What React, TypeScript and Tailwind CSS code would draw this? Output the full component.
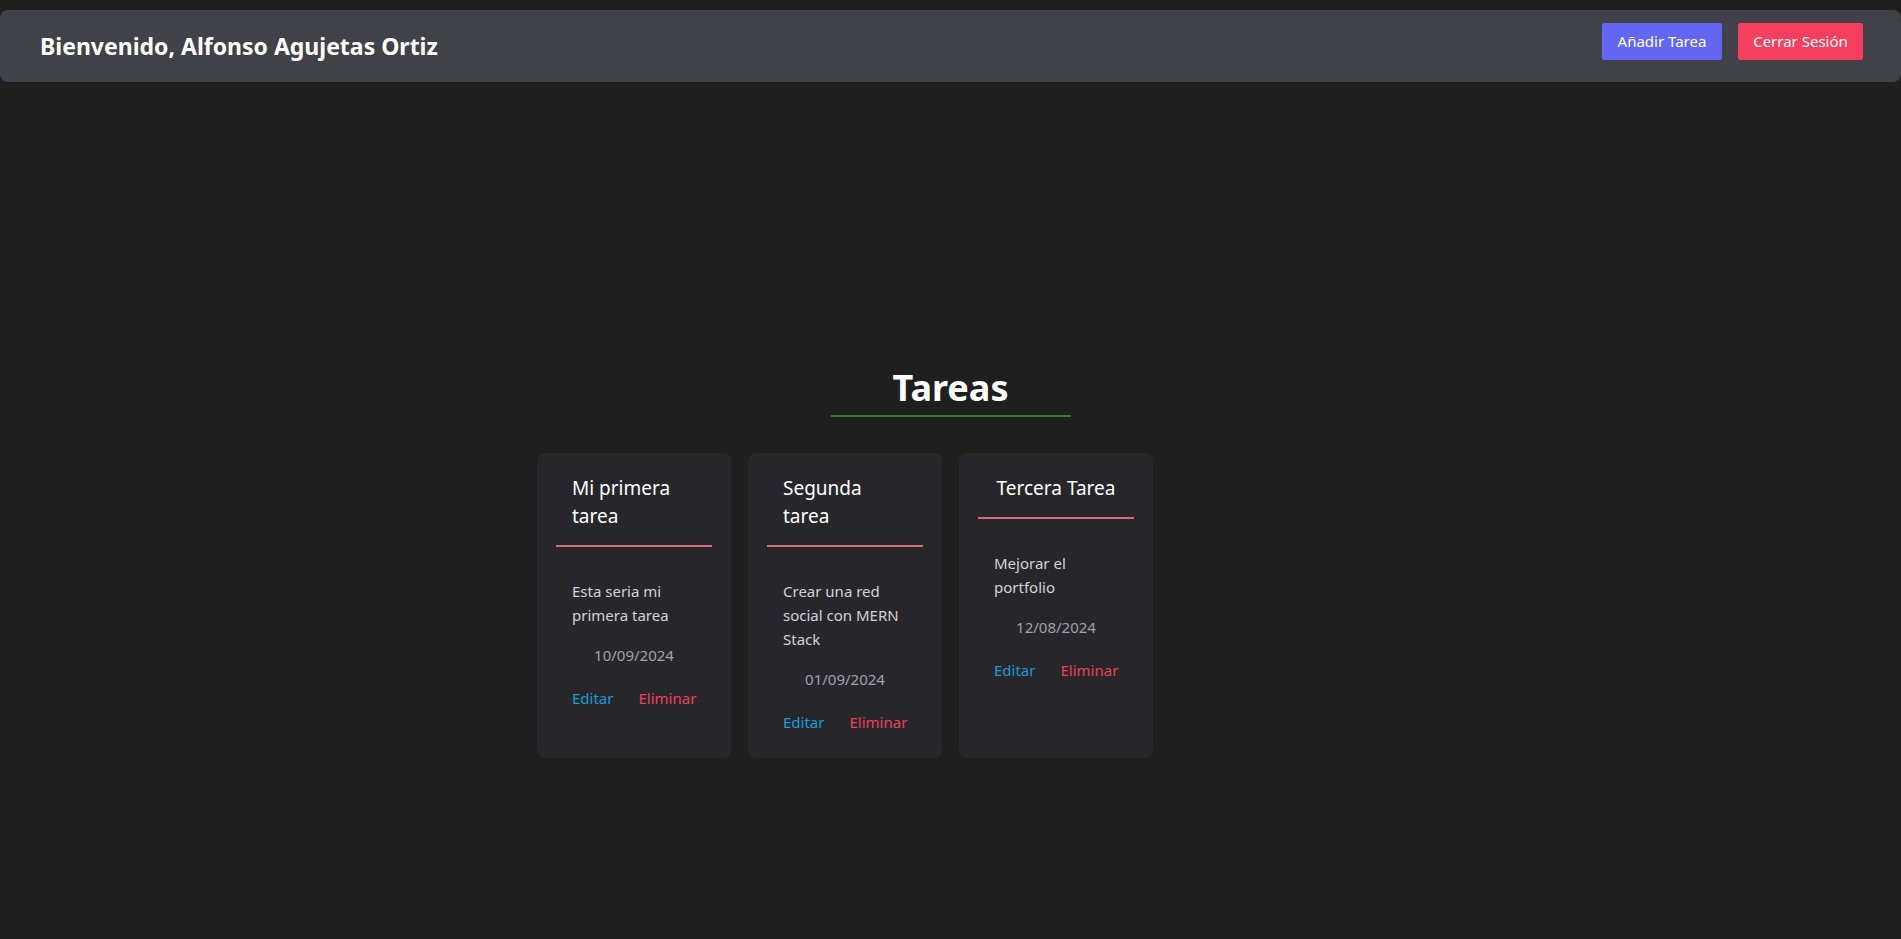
import React from "react";

type Task = { title: string; desc: string; date: string };

const tasks: Task[] = [
  { title: "Mi primera tarea", desc: "Esta seria mi primera tarea", date: "10/09/2024" },
  { title: "Segunda tarea", desc: "Crear una red social con MERN Stack", date: "01/09/2024" },
  { title: "Tercera Tarea", desc: "Mejorar el portfolio", date: "12/08/2024" },
];

function Card({ t }: { t: Task }) {
  return (
    <div className="flex flex-col rounded-lg bg-[#27272b] px-[19px] pt-[21px] pb-[24px]">
      <h2 className="w-fit self-center px-4 pb-[15px] text-[19px] leading-7 text-white">{t.title}</h2>
      <div className="h-[2px] w-full bg-[#db6b80]" />
      <p className="mt-8 px-4 text-[15px] leading-6 text-[#d4d4d8]">{t.desc}</p>
      <p className="mt-4 text-center text-[15px] leading-6 text-[#a1a1aa]">{t.date}</p>
      <div className="mt-[19px] flex gap-[25px] px-4 text-[15px] leading-6">
        <button className="text-[#1e9bd7]">Editar</button>
        <button className="text-[#ec405c]">Eliminar</button>
      </div>
    </div>
  );
}

export default function App() {
  return (
    <div
      className="min-h-screen bg-[#1f1f1f] pt-[10px]"
      style={{ fontFamily: '"Noto Sans", "Open Sans", sans-serif' }}
    >
      <header className="flex h-[72px] items-start justify-between rounded-lg bg-[#414249] pt-[13px] pl-10 pr-[38px]">
        <h1 className="mt-[7px] text-[23px] font-bold leading-8 text-white">
          Bienvenido, Alfonso Agujetas Ortiz
        </h1>
        <div className="flex gap-4">
          <button className="h-[37px] w-[120px] rounded-[2px] bg-[#6366f1] text-[15px] text-white">
            Añadir Tarea
          </button>
          <button className="h-[37px] w-[125px] rounded-[2px] bg-[#f43f5e] text-[15px] text-white">
            Cerrar Sesión
          </button>
        </div>
      </header>
      <main className="mt-[284px] flex flex-col items-center">
        <h2 className="text-[36px] font-bold leading-[44px] text-white">Tareas</h2>
        <div className="mt-[5px] h-[2px] w-[240px] bg-[#3a7a2c]" />
        <div className="mt-[36px] grid w-[827px] grid-cols-4 items-stretch gap-[17px]">
          {tasks.map((t) => (
            <Card key={t.title} t={t} />
          ))}
        </div>
      </main>
    </div>
  );
}
